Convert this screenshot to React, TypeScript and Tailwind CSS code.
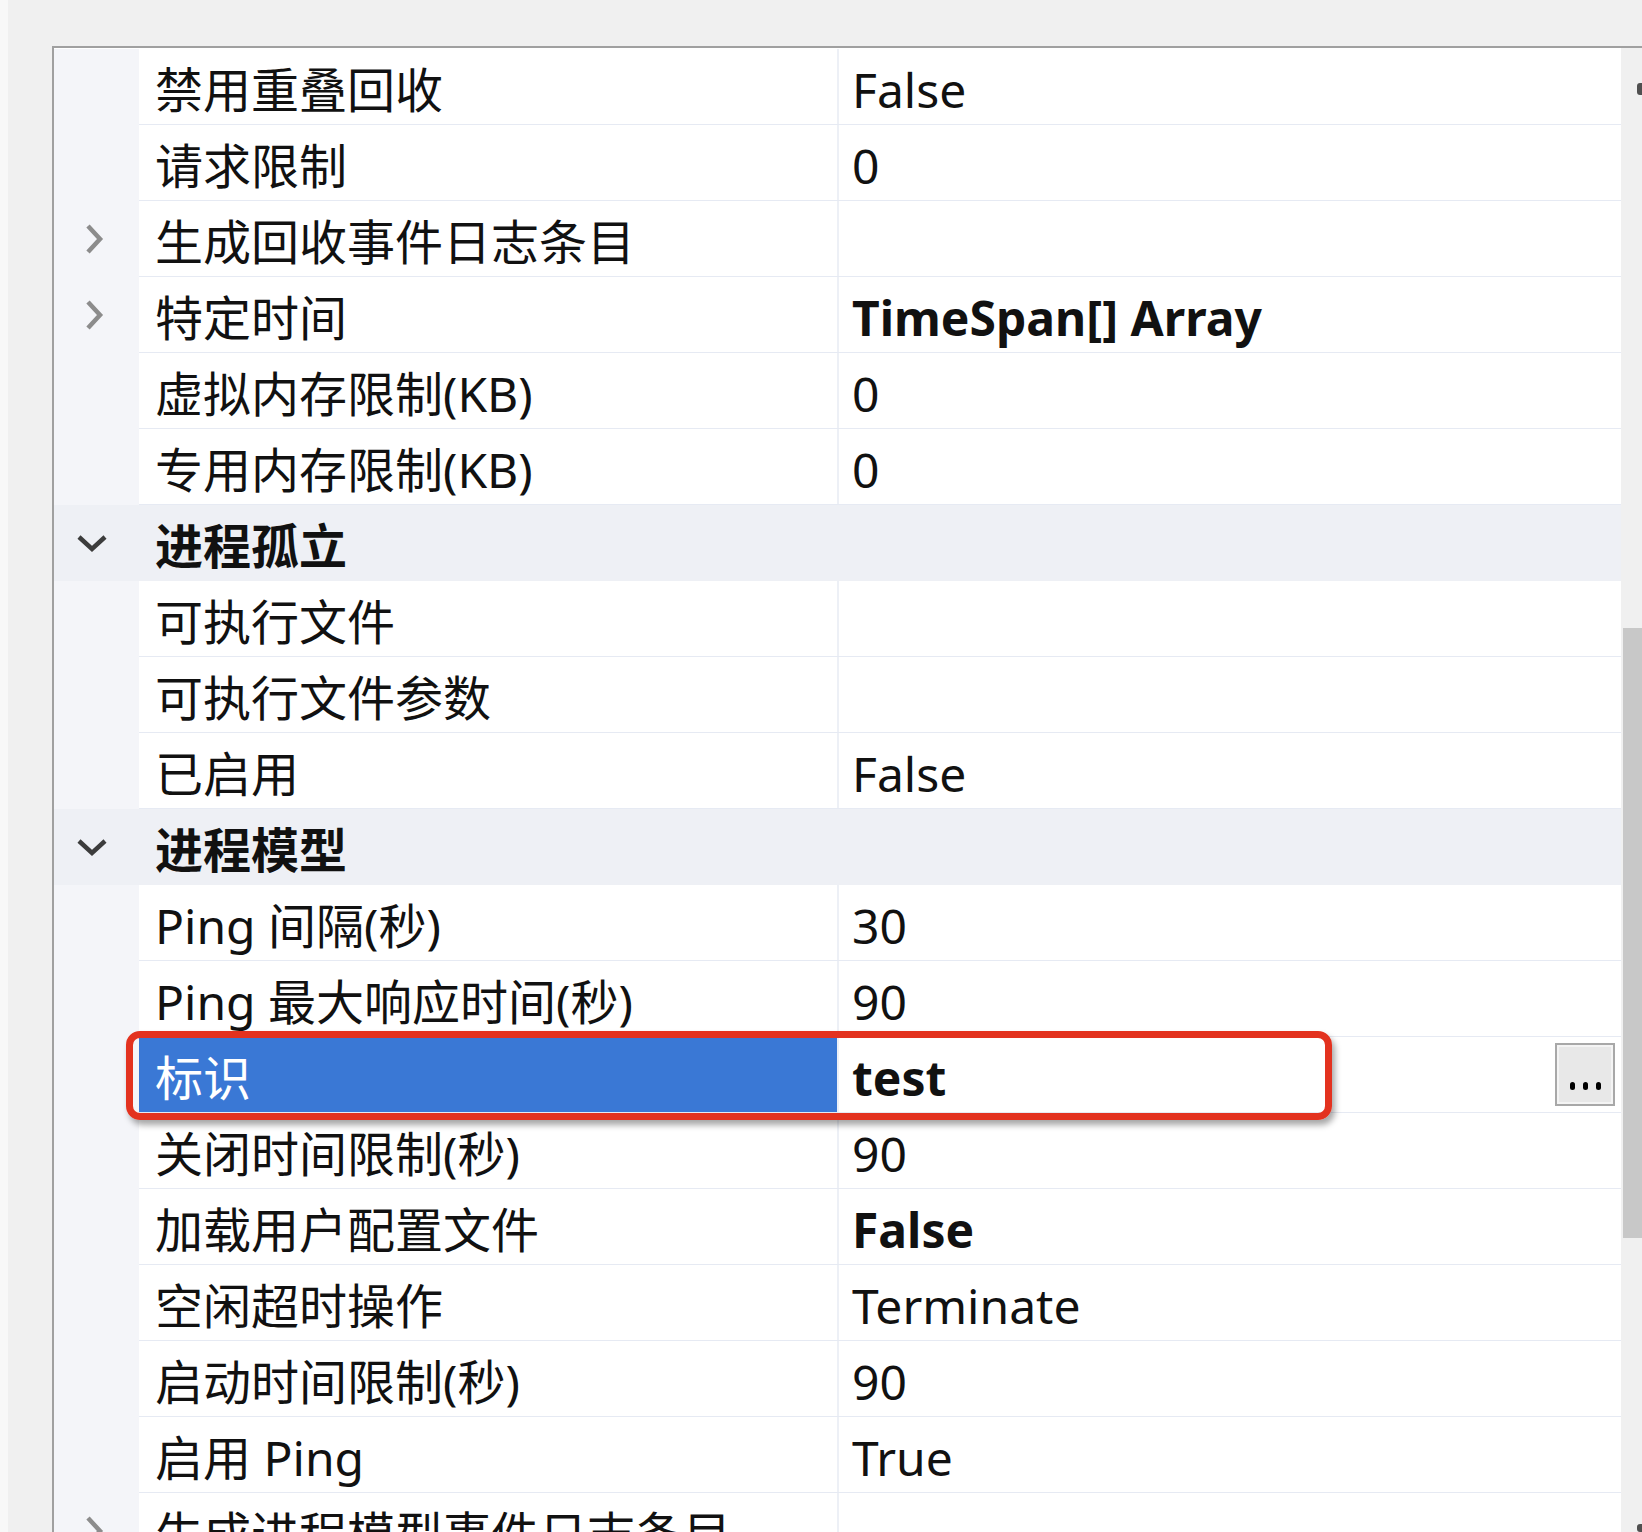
import React from "react";

type Row =
  | { kind: "cat"; label: string }
  | {
      kind: "prop";
      label: string;
      value?: string;
      bold?: boolean;
      expandable?: boolean;
      selected?: boolean;
    };

const rows: Row[] = [
  { kind: "prop", label: "禁用重叠回收", value: "False" },
  { kind: "prop", label: "请求限制", value: "0" },
  { kind: "prop", label: "生成回收事件日志条目", expandable: true },
  { kind: "prop", label: "特定时间", value: "TimeSpan[] Array", bold: true, expandable: true },
  { kind: "prop", label: "虚拟内存限制(KB)", value: "0" },
  { kind: "prop", label: "专用内存限制(KB)", value: "0" },
  { kind: "cat", label: "进程孤立" },
  { kind: "prop", label: "可执行文件" },
  { kind: "prop", label: "可执行文件参数" },
  { kind: "prop", label: "已启用", value: "False" },
  { kind: "cat", label: "进程模型" },
  { kind: "prop", label: "Ping 间隔(秒)", value: "30" },
  { kind: "prop", label: "Ping 最大响应时间(秒)", value: "90" },
  { kind: "prop", label: "标识", value: "test", bold: true, selected: true },
  { kind: "prop", label: "关闭时间限制(秒)", value: "90" },
  { kind: "prop", label: "加载用户配置文件", value: "False", bold: true },
  { kind: "prop", label: "空闲超时操作", value: "Terminate" },
  { kind: "prop", label: "启动时间限制(秒)", value: "90" },
  { kind: "prop", label: "启用 Ping", value: "True" },
  { kind: "prop", label: "生成进程模型事件日志条目", expandable: true },
];

const ChevronRight = () => (
  <svg width="20" height="34" viewBox="0 0 20 34">
    <path d="M4 4 L16 17 L4 30" fill="none" stroke="#8c8c8c" strokeWidth="4.5" />
  </svg>
);

const ChevronDown = () => (
  <svg width="34" height="20" viewBox="0 0 34 20">
    <path d="M4 4 L17 16 L30 4" fill="none" stroke="#3c3c3c" strokeWidth="4.5" />
  </svg>
);

// the "..." editor button of the selected property
const EllipsisButton = () => (
  <div className="mr-[6px] ml-auto h-[63px] w-[60px] shrink-0 border-2 border-[#a8a8a8] bg-[#e8e8e8]">
    <div className="flex h-full w-full items-end justify-center gap-[8px] border-2 border-[#f4f4f4] pb-[12px]">
      <div className="h-[8px] w-[5px] rounded-full bg-black" />
      <div className="h-[8px] w-[5px] rounded-full bg-black" />
      <div className="h-[8px] w-[5px] rounded-full bg-black" />
    </div>
  </div>
);

const CategoryRow = ({ label }: { label: string }) => (
  <div className="flex h-[76px] shrink-0 bg-[#eef0f5]">
    <div className="flex w-[85px] shrink-0 items-center pl-[21px]">
      <ChevronDown />
    </div>
    <div className="flex items-center pl-[16px] pt-[6px] font-bold">{label}</div>
  </div>
);

const PropRow = ({ row }: { row: Extract<Row, { kind: "prop" }> }) => (
  <div className={"relative flex h-[76px] shrink-0 " + (row.selected ? "z-10" : "")}>
    <div className="flex w-[85px] shrink-0 items-center bg-[#f4f5f9] pl-[30px]">
      {row.expandable && <ChevronRight />}
    </div>
    <div className="flex flex-1 border-b border-[#e6eaf3]">
      <div
        className={
          "flex w-[698px] shrink-0 items-center pl-[16px] " +
          (row.selected ? "bg-[#3a78d5] text-white" : "bg-white")
        }
      >
        <span className="pt-[6px] whitespace-nowrap">{row.label}</span>
      </div>
      <div className="flex flex-1 items-center border-l-2 border-[#edf0f6] bg-white pl-[13px]">
        <span className={"pt-[6px] whitespace-nowrap " + (row.bold ? "font-bold" : "")}>{row.value}</span>
        {row.selected && <EllipsisButton />}
      </div>
    </div>
    {row.selected && (
      <div className="pointer-events-none absolute top-[-6px] left-[72px] z-10 h-[89px] w-[1206px] rounded-[14px] border-[7px] border-[#e3321f] shadow-[3px_5px_6px_rgba(0,0,0,0.35)]" />
    )}
  </div>
);

export default function App() {
  return (
    <div className="flex h-[1532px] w-[1642px] overflow-hidden bg-[#f0f0f0] font-['Noto_Sans','Noto_Sans_CJK_SC',sans-serif] text-[48px] leading-none text-[#111]">
      <div className="w-[8px] shrink-0 bg-[#f8f8f8]" />
      <div className="flex flex-1 flex-col pt-[46px] pl-[44px]">
        <div className="flex min-h-0 flex-1 border-t-2 border-l-2 border-[#a0a0a0] bg-white">
          <div className="flex min-w-0 flex-1 flex-col overflow-hidden pt-[1px]">
            {rows.map((row, i) =>
              row.kind === "cat" ? <CategoryRow key={i} label={row.label} /> : <PropRow key={i} row={row} />
            )}
          </div>
          {/* vertical scrollbar, mostly cut off at the right edge */}
          <div className="flex w-[21px] shrink-0 flex-col bg-[#f0f0f0] pl-[2px]">
            <div className="mt-[35px] ml-auto h-[12px] w-[5px] rounded-l-[3px] bg-[#505050]" />
            <div className="mt-[533px] h-[610px] bg-[#c8c8c8]" />
            <div className="mt-auto ml-auto h-[8px] w-[5px] rounded-l-[3px] bg-[#505050]" />
          </div>
        </div>
      </div>
    </div>
  );
}
